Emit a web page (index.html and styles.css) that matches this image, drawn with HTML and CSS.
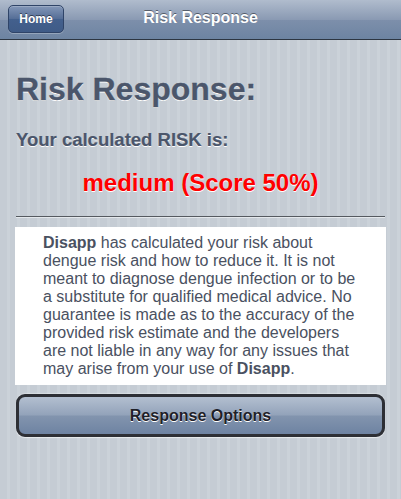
FILE: index.html
```html
<!DOCTYPE html>
<html>
<head>
<meta charset="utf-8">
<link rel="stylesheet" href="styles.css">
</head>
<body>
<div class="toolbar">
  <a class="back">Home</a>
  <h1 class="title">Risk Response</h1>
</div>
<div class="content">
  <h2 class="heading">Risk Response:</h2>
  <p class="label">Your calculated RISK is:</p>
  <p class="result">medium (Score 50%)</p>
  <div class="rule"></div>
  <div class="notice">
    <p><b>Disapp</b> has calculated your risk about dengue risk and how to reduce it. It is not meant to diagnose dengue infection or to be a substitute for qualified medical advice. No guarantee is made as to the accuracy of the provided risk estimate and the developers are not liable in any way for any issues that may arise from your use of <b>Disapp</b>.</p>
  </div>
  <a class="button">Response Options</a>
</div>
</body>
</html>
```
FILE: styles.css
```css
html, body {
  margin: 0;
  padding: 0;
  height: 100%;
}
body {
  font-family: "Liberation Sans", Arial, sans-serif;
  background: repeating-linear-gradient(90deg, #c5ccd4 0, #c5ccd4 7px, #cbd2d9 7px, #cbd2d9 10px);
}
.toolbar {
  position: relative;
  height: 40px;
  box-sizing: border-box;
  border-bottom: 1px solid #2d3642;
  background: linear-gradient(180deg, #b0bccd 0%, #8a9ab3 50%, #7d8fab 51%, #6d84a2 100%);
  display: flex;
  align-items: center;
  justify-content: center;
}
.title {
  margin: 0;
  font-size: 16px;
  font-weight: bold;
  color: #fff;
  text-shadow: 0 -1px 0 rgba(0,0,0,0.45);
  margin-top: -3px;
}
.back {
  position: absolute;
  left: 8px;
  top: 5px;
  width: 56px;
  height: 28px;
  box-sizing: border-box;
  border: 1px solid #2f4468;
  border-radius: 5px;
  background: linear-gradient(180deg, #8397b8 0%, #546d96 50%, #43608d 51%, #3f5b87 100%);
  box-shadow: 0 1px 0 rgba(255,255,255,0.25), inset 0 1px 0 rgba(255,255,255,0.2);
  color: #fff;
  font-weight: bold;
  font-size: 12px;
  display: flex;
  align-items: center;
  justify-content: center;
  text-shadow: 0 -1px 0 rgba(0,0,0,0.5);
}
.content {
  padding: 0 16px;
  display: flex;
  flex-direction: column;
}
.heading {
  margin: 29px 0 0 0;
  font-size: 32px;
  line-height: 40px;
  font-weight: bold;
  color: #4b566b;
  text-shadow: 0 1px 0 #fff;
  -webkit-text-stroke: 0.3px #4b566b;
}
.label {
  margin: 20px 0 0 0;
  font-size: 18.5px;
  line-height: 22px;
  font-weight: bold;
  color: #4b566b;
  text-shadow: 0 1px 0 #fff;
  -webkit-text-stroke: 0.2px #4b566b;
}
.result {
  margin: 18px 0 0 0;
  font-size: 24px;
  line-height: 28px;
  font-weight: bold;
  color: #ff0000;
  text-align: center;
  text-shadow: 0 1px 0 #fff;
}
.rule {
  margin-top: 19px;
  height: 1px;
  background: #555a60;
  border-bottom: 1px solid #e4e8ec;
}
.notice {
  margin: 9px -1px 0 -1px;
  background: #fff;
  padding: 7px 28px 7px 28px;
}
.notice p {
  margin: 0;
  font-size: 16px;
  line-height: 18px;
  color: #4a5161;
}
.notice b {
  color: #4a5161;
}
.button {
  margin-top: 9px;
  height: 43px;
  box-sizing: border-box;
  border: 3px solid #2d2f35;
  border-radius: 9px;
  background: linear-gradient(180deg, #b3bfd0 0%, #93a3ba 48%, #8294ae 52%, #6e83a2 100%);
  box-shadow: 0 1px 1px rgba(255,255,255,0.6), 0 -1px 1px rgba(255,255,255,0.3);
  display: flex;
  align-items: center;
  justify-content: center;
  font-size: 16px;
  font-weight: bold;
  color: #1e2028;
  text-shadow: 0 1px 0 #fff;
}
```
